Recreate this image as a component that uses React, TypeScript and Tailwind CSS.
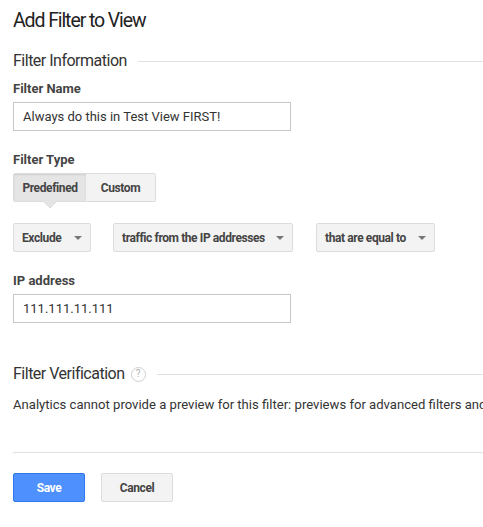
import React from "react";

function Caret() {
  return (
    <svg width="8" height="4" viewBox="0 0 8 4" className="ml-auto shrink-0">
      <path d="M0 0 L8 0 L4 4 Z" fill="#777" />
    </svg>
  );
}

function Select({ label, className }: { label: string; className: string }) {
  return (
    <div
      className={`flex h-[29px] items-center whitespace-nowrap rounded-[2px] border border-[#dcdcdc] bg-[#f3f3f3] pl-[8px] pr-[8px] text-[12px] font-bold tracking-[-0.4px] text-[#444] ${className}`}
    >
      <span>{label}</span>
      <Caret />
    </div>
  );
}

function SectionHeader({ title, help }: { title: string; help?: boolean }) {
  return (
    <div className="flex items-center">
      <span className="text-[16px] leading-[20px] tracking-[-0.5px] text-[#333]">{title}</span>
      {help && (
        <span className="ml-[6px] flex h-[15px] w-[15px] items-center justify-center rounded-full border border-[#cfcfcf] text-[10px] leading-none text-[#b0b0b0]">
          ?
        </span>
      )}
      <div className="ml-[11px] h-px flex-1 bg-[#e0e0e0]" />
    </div>
  );
}

export default function App() {
  return (
    <div
      className="h-[527px] w-[483px] overflow-hidden bg-white pl-[13px] text-[#222]"
      style={{ fontFamily: "Roboto, 'Liberation Sans', sans-serif" }}
    >
      <h1 className="pt-[7px] text-[19.5px] leading-[28px] tracking-[-1.1px] text-[#222]">Add Filter to View</h1>

      <div className="mt-[16px]">
        <SectionHeader title="Filter Information" />
      </div>

      <div className="mt-[10px] text-[13px] font-bold leading-[16px] text-[#444]">Filter Name</div>
      <div className="mt-[5px] flex h-[29px] w-[278px] items-center border border-[#c8c8c8] px-[9px] text-[13px] text-[#333]">
        Always do this in Test View FIRST!
      </div>

      <div className="mt-[21px] text-[13px] font-bold leading-[16px] text-[#444]">Filter Type</div>
      <div className="relative mt-[5px] flex h-[29px] w-[143px] rounded-[2px] border border-[#dcdcdc] text-[12px] font-bold tracking-[-0.4px] text-[#444]">
        <div className="flex w-[72px] items-center justify-center bg-[#e5e5e5] shadow-[inset_0_1px_2px_rgba(0,0,0,0.1)]">
          Predefined
        </div>
        <div className="flex flex-1 items-center justify-center bg-[#f3f3f3]">Custom</div>
        <svg className="absolute left-[29px] top-[27px]" width="14" height="8" viewBox="0 0 14 8">
          <path d="M0 0 L14 0 L7 7 Z" fill="#e5e5e5" />
          <path d="M0 0 L7 7 L14 0" fill="none" stroke="#dcdcdc" strokeWidth="1" />
        </svg>
      </div>

      <div className="mt-[21px] flex">
        <Select label="Exclude" className="w-[78px]" />
        <Select label="traffic from the IP addresses" className="ml-[22px] w-[180px]" />
        <Select label="that are equal to" className="ml-[23px] w-[119px]" />
      </div>

      <div className="mt-[21px] text-[13px] font-bold leading-[16px] text-[#444]">IP address</div>
      <div className="mt-[5px] flex h-[29px] w-[278px] items-center border border-[#c8c8c8] px-[9px] text-[13px] text-[#333]">
        111.111.11.111
      </div>

      <div className="mt-[41px]">
        <SectionHeader title="Filter Verification" help />
      </div>

      <div className="mt-[13px] whitespace-nowrap text-[13.1px] leading-[16px] text-[#333]">
        Analytics cannot provide a preview for this filter: previews for advanced filters and conditional filters are not available.
      </div>

      <div className="mt-[39px] h-px bg-[#e0e0e0]" />

      <div className="mt-[20px] flex gap-[16px]">
        <button className="h-[29px] w-[72px] rounded-[2px] border border-[#3079ed] bg-[#4d90fe] text-[12px] font-bold tracking-[-0.4px] text-white">
          Save
        </button>
        <button className="h-[29px] w-[72px] rounded-[2px] border border-[#dcdcdc] bg-[#f3f3f3] text-[12px] font-bold tracking-[-0.4px] text-[#444]">
          Cancel
        </button>
      </div>
    </div>
  );
}
